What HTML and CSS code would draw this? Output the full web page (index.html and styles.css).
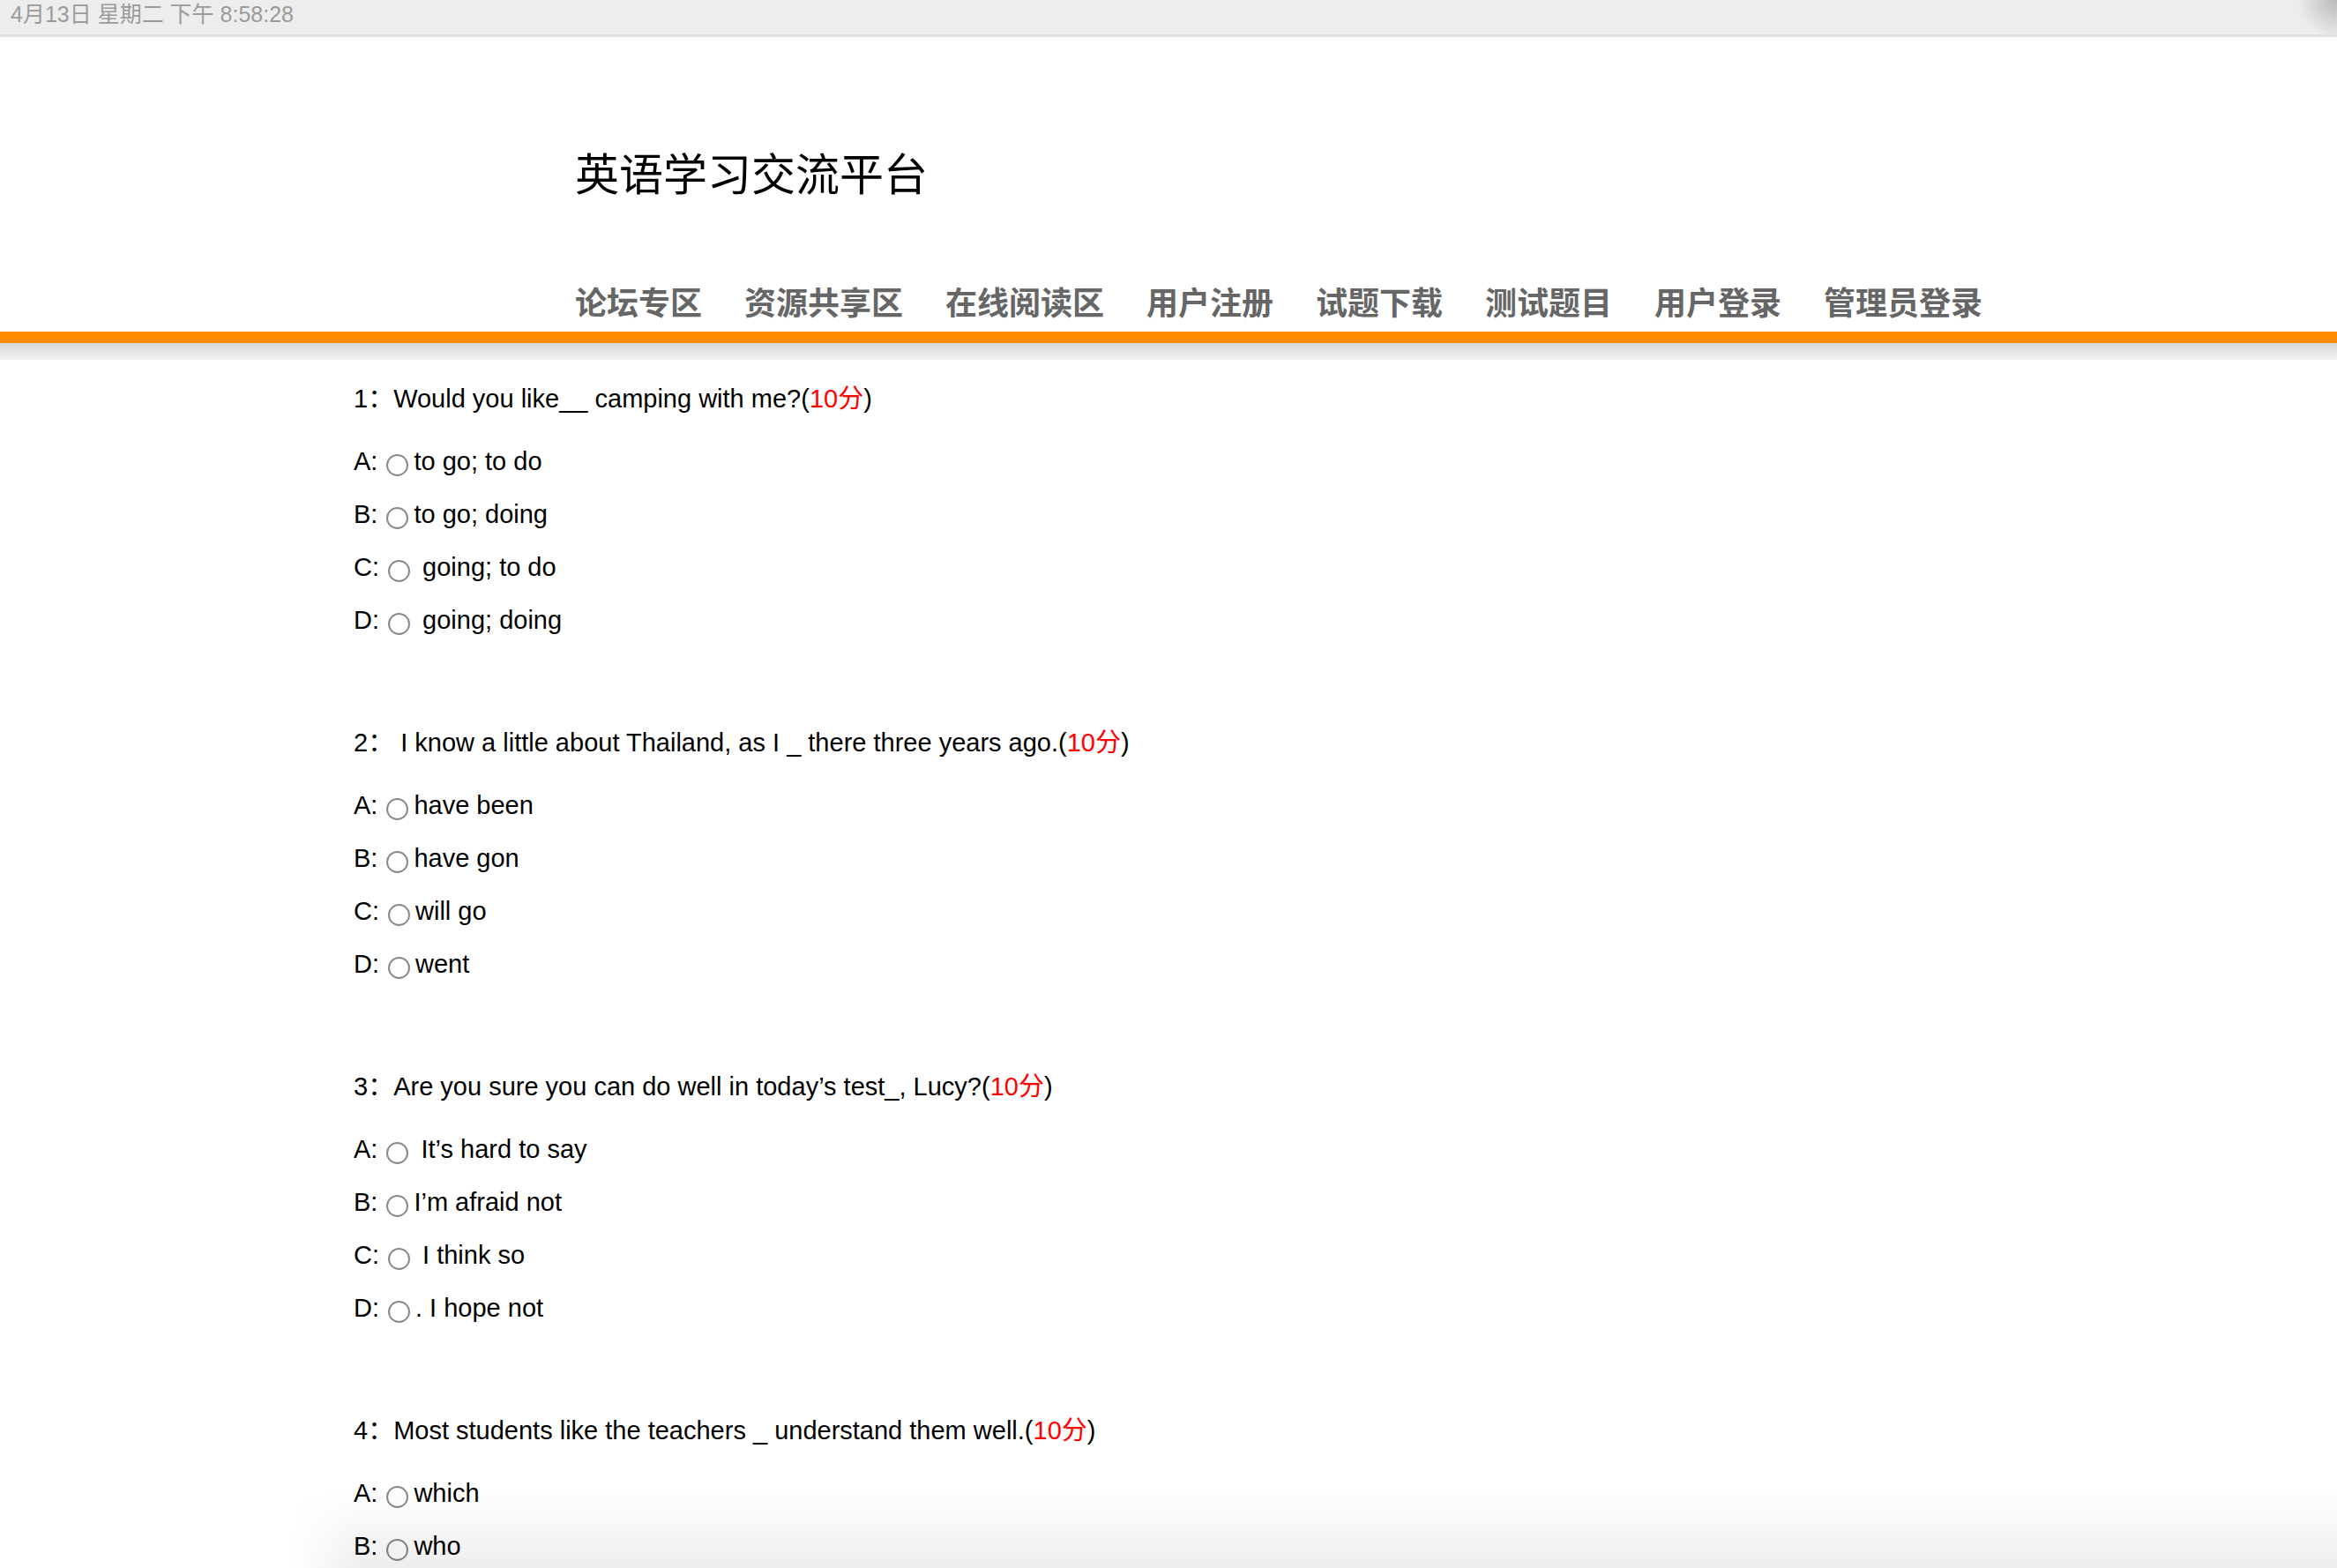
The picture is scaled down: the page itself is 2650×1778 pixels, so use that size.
FILE: index.html
```html
<!DOCTYPE html>
<html lang="zh-CN">
<head>
<meta charset="utf-8">
<title>英语学习交流平台</title>
<link rel="stylesheet" href="styles.css">
</head>
<body>
<div class="topbar">4月13日 星期二 下午 8:58:28</div>
<header class="header">
  <h1 class="title">英语学习交流平台</h1>
  <nav class="nav">
    <a class="nav-item">论坛专区</a>
    <a class="nav-item">资源共享区</a>
    <a class="nav-item">在线阅读区</a>
    <a class="nav-item">用户注册</a>
    <a class="nav-item">试题下载</a>
    <a class="nav-item">测试题目</a>
    <a class="nav-item">用户登录</a>
    <a class="nav-item">管理员登录</a>
  </nav>
</header>
<div class="orange-bar"></div>
<div class="bar-shadow"></div>
<main class="main">
  <section class="question">
    <p class="q-title">1：Would you like__ camping with me?(<span class="score">10分</span>)</p>
    <p class="option">A:<input class="radio" type="radio" name="q1">to go; to do</p>
    <p class="option">B:<input class="radio" type="radio" name="q1">to go; doing</p>
    <p class="option">C:<input class="radio" type="radio" name="q1"> going; to do</p>
    <p class="option">D:<input class="radio" type="radio" name="q1"> going; doing</p>
  </section>
  <section class="question">
    <p class="q-title">2： I know a little about Thailand, as I _ there three years ago.(<span class="score">10分</span>)</p>
    <p class="option">A:<input class="radio" type="radio" name="q2">have been</p>
    <p class="option">B:<input class="radio" type="radio" name="q2">have gon</p>
    <p class="option">C:<input class="radio" type="radio" name="q2">will go</p>
    <p class="option">D:<input class="radio" type="radio" name="q2">went</p>
  </section>
  <section class="question">
    <p class="q-title">3：Are you sure you can do well in today’s test_, Lucy?(<span class="score">10分</span>)</p>
    <p class="option">A:<input class="radio" type="radio" name="q3"> It’s hard to say</p>
    <p class="option">B:<input class="radio" type="radio" name="q3">I’m afraid not</p>
    <p class="option">C:<input class="radio" type="radio" name="q3"> I think so</p>
    <p class="option">D:<input class="radio" type="radio" name="q3">. I hope not</p>
  </section>
  <section class="question">
    <p class="q-title">4：Most students like the teachers _ understand them well.(<span class="score">10分</span>)</p>
    <p class="option">A:<input class="radio" type="radio" name="q4">which</p>
    <p class="option">B:<input class="radio" type="radio" name="q4">who</p>
  </section>
</main>
<div class="bottom-shade"></div>
</body>
</html>
```
FILE: styles.css
```css
html {
  scrollbar-width: none;
}
html::-webkit-scrollbar {
  display: none;
}
body {
  margin: 0;
  background: #fff;
  font-family: "Liberation Sans", "Noto Sans CJK SC", sans-serif;
  color: #000;
}
.topbar {
  height: 39px;
  line-height: 33px;
  padding-left: 12px;
  border-bottom: 3px solid #e3e3e3;
  background:
    radial-gradient(circle at 100% 0, rgba(0,0,0,0.22), rgba(0,0,0,0) 45px),
    #ededed;
  color: #9b9b9b;
  font-size: 25px;
  font-family: "Liberation Sans", "Noto Sans CJK SC", sans-serif;
}
.header {
  padding: 122px 0 0 652px;
}
.title {
  margin: 0;
  font-family: "Noto Sans CJK SC", sans-serif;
  font-weight: 400;
  font-size: 50px;
  line-height: 60px;
  color: #000;
}
.nav {
  display: flex;
  gap: 48px;
  margin-top: 92px;
}
.nav-item {
  font-family: "Noto Sans CJK SC", sans-serif;
  font-weight: 700;
  font-size: 36px;
  line-height: 50px;
  color: #666;
  text-decoration: none;
}
.orange-bar {
  height: 13px;
  margin-top: 10px;
  background: #ff8c00;
}
.bar-shadow {
  height: 19px;
  background: linear-gradient(#d6d6d6, #f3f3f3);
}
.main {
  padding: 24px 0 0 401px;
}
.question {
  margin-bottom: 89px;
}
.q-title {
  margin: 0 0 21px;
  font-size: 29px;
  line-height: 40px;
  white-space: pre;
}
.score {
  color: #f00;
}
.option {
  margin: 0;
  font-size: 29px;
  line-height: 60px;
  white-space: pre;
}
.radio {
  -webkit-appearance: none;
  appearance: none;
  box-sizing: border-box;
  width: 25px;
  height: 25px;
  margin: 0 6px 0 10px;
  border: 2px solid #8a8a8a;
  border-radius: 50%;
  background: #fff;
  vertical-align: -7px;
}
.bottom-shade {
  position: fixed;
  left: 330px;
  right: 0;
  bottom: 0;
  height: 90px;
  pointer-events: none;
  background: linear-gradient(rgba(0,0,0,0), rgba(0,0,0,0.065));
  -webkit-mask-image: linear-gradient(to right, transparent, #000 80px);
  mask-image: linear-gradient(to right, transparent, #000 80px);
}
```
